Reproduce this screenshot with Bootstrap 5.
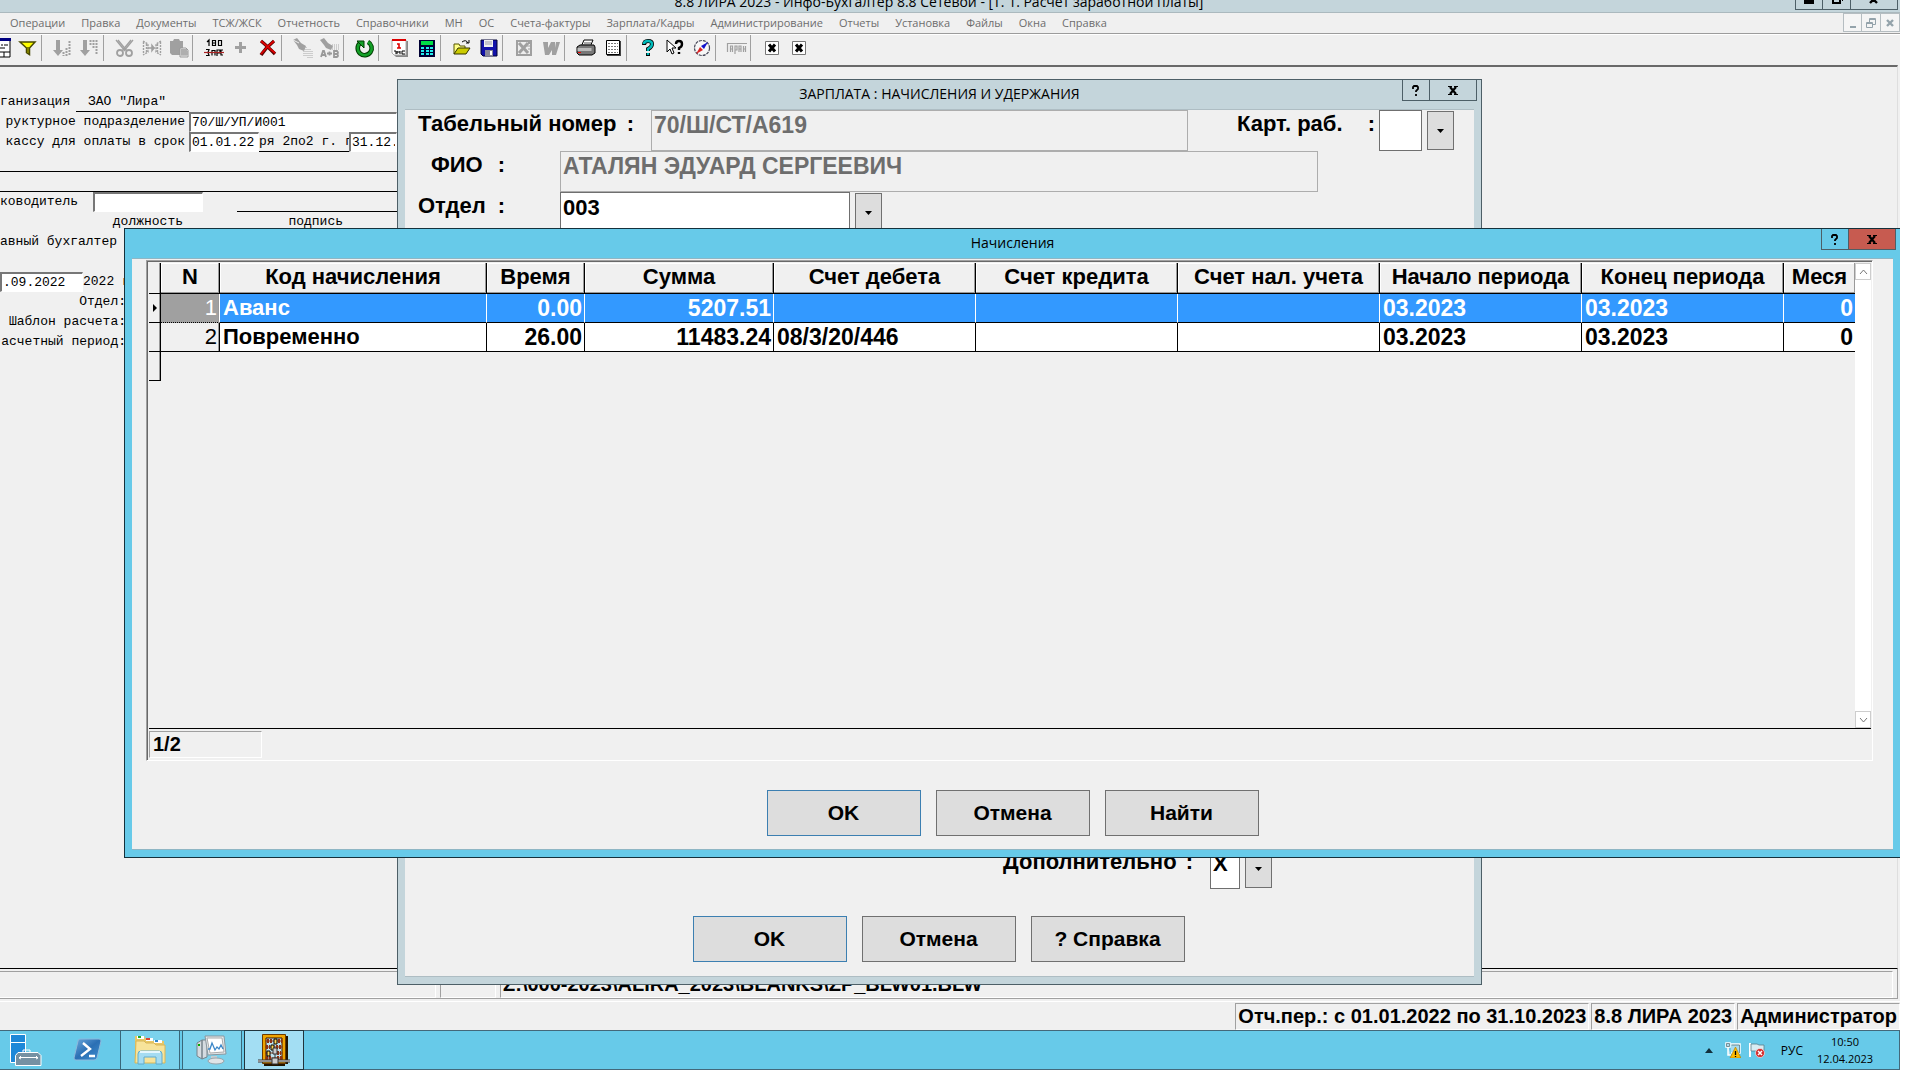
<!DOCTYPE html>
<html lang="ru">
<head>
<meta charset="utf-8">
<meta name="viewport" content="width=device-width, initial-scale=1">
<title>Инфо-Бухгалтер 8.8</title>
<link href="https://cdn.jsdelivr.net/npm/bootstrap@5.3.0/dist/css/bootstrap.min.css" rel="stylesheet">
<style>
:root{--face:#f0f0f0;--frame:#c4d5db;--sky:#67cae9;--ui:"Open Sans","Noto Sans",sans-serif;--form:"Liberation Sans",Arial,sans-serif;--mono:"Liberation Mono","Courier New",monospace}
body{background:#fff;color:#000;font-family:var(--ui);overflow:hidden}
.desk{height:calc(100vh - 10px);margin-right:20px;background:var(--face)}
button,input{border-radius:0;font:inherit;color:inherit}
.apptitle{height:13px;background:var(--frame);border-bottom:1px solid #abb9be;font-size:14px;line-height:20px}
.apptitle .caption{padding-right:22px}
.capbtn{height:21px;width:28px;padding:0;border:1px solid #4d5f67;border-top:0;background:transparent;display:flex;align-items:center;justify-content:center}
.capbtn + .capbtn{border-left:0}
.capbtn.wide{width:47px}
.capbtn.red{background:#c75b50}
.mainbtns{right:2px;top:-11px}
.menu{height:22px;border-bottom:1px solid #fff;box-shadow:inset 0 -1px #9c9c9c;padding-left:10px;gap:16px;font-size:11px;line-height:20px}
.menu a{color:#6d6d6d;text-decoration:none;white-space:nowrap}
.mdi{width:19px;height:19px;padding:0;border:1px solid #b5bdc1;background:#f5f5f5;display:flex}
.mdi + .mdi{border-left:0}
.tools{height:30px;margin-left:-13px}
.tool{width:27px;height:26px;padding:0;border:0;background:transparent;display:flex;align-items:center;justify-content:center;flex:none}
.split{width:8px;height:26px;border-left:1px solid #a0a0a0;flex:none}
.sheet{border-top:2px solid #696969;border-bottom:1px solid #000;padding-top:25px;margin-right:2px;border-right:1px solid #dedede;font-family:var(--mono);font-size:13px;line-height:19px;white-space:pre}
.line{height:20px;width:397px;overflow:hidden;flex:none}
.line > *{flex:none}
.line > .fill{flex:1 1 0;min-width:0}
.rule{border-bottom:1px solid #000}
.cell{height:20px;border:1px solid #fff;border-top:2px solid #777;border-left:2px solid #777;background:#fff;padding:0 1px;font-size:13px;line-height:17px;outline:0}
.w-org{width:76px}.w-org2{width:113px;padding-left:12px}.w-lab{width:189px;padding-right:4px}.w-date{width:70px}.w-mid{width:90px;overflow:hidden}
.w-head{width:92px;margin-right:1px}.w-post{width:110px;margin-right:34px}.w-day{width:83px}.w-side{width:126px}
.w-caps{width:183px}.w-sign{width:160px}
.stat{font-family:var(--form);font-weight:700;font-size:20px;line-height:24px;white-space:nowrap}
.stat1{height:33px;padding:2px 7px 3px 0;border-bottom:1px solid #fff;box-shadow:inset -2px -2px var(--face),inset -3px -3px #a0a0a0}
.stat2{height:28px;gap:2px;padding-top:1px}
.pane{border:1px solid #a0a0a0;border-right-color:#fff;border-bottom-color:#fff;padding:0 2px}
.p1{width:436px;border-left:0}.p2{width:56px}
.task{height:40px;background:var(--sky);border:1px solid #43687a;border-left:0;font-size:12px;line-height:17px}
.tbtn{height:40px;padding:0;border:0;background:transparent;display:flex;align-items:center;justify-content:center;flex:none}
.tbtn.start{width:52px}.tbtn.shell{width:68px;padding-left:4px}
.tbtn.run{width:60px;background:#7bd2ec;border:1px solid #39677a;margin-right:2px}
.tbtn.now{background:#a3def3;border-color:#21343c}
.tray{gap:8px;padding-right:24px}
.clock{width:60px;font-size:11px}
.win{position:absolute;border:1px solid #4d5f67;background:var(--frame);padding:0 7px 7px}
.wtitle{height:29px;font-size:14px;line-height:28px;text-align:center}
.wbtns{position:absolute;top:0;right:4px}
.inside{background:var(--face);border-top:1px solid #aebdc3;border-bottom:1px solid #aebdc3;font-family:var(--form);font-weight:700;font-size:22px;line-height:26px}
.pay{left:397px;top:79px;width:1085px}
.acc{left:124px;top:228px;right:-1px;background:var(--sky);border-color:#15313c}
.acc .inside{border-top-color:#8fb6c4;border-bottom-color:#8fb6c4}
.frow{height:41px}
.frow label{display:flex;justify-content:space-between;line-height:28px;white-space:nowrap}
.fld{height:41px;border:1px solid #6f6f6f;background:#fff;padding:2px 2px 12px;font-weight:700;outline:0;flex:none;min-width:0}
.fld:disabled{background:var(--face);border-color:#adadad;color:#6d6d6d;opacity:1;font-size:23px}
.drop{width:27px;height:39px;margin:1px 0 0 5px;border:1px solid #707070;background:#ddd;padding:0;flex:none}
.l-num{width:216px;margin:0 17px 0 13px}.l-fio{width:74px;margin:0 55px 0 26px}.l-dep{width:87px;margin:0 55px 0 13px}.l-card{width:138px;margin-left:49px;margin-right:4px}.l-add{width:190px;margin:0 17px 0 598px}
.f-num{width:537px}.f-fio{width:758px}.f-dep{width:290px}.f-card{width:43px}.f-add{width:30px}
.rest{height:615px}
.cmd{width:154px;height:46px;border:1px solid #707070;background:#ddd;font-weight:700;font-size:21px;padding:0}
.cmd.def{border-color:#3c7fb1}
.cmds{gap:15px;padding:29px 0 13px}
.pay .cmds{padding:27px 2px 14px 0}
.listbox{border:1px solid #a0a0a0;border-right-color:#fff;border-bottom-color:#fff;box-shadow:inset 1px 1px #696969;padding:2px 1px 0 2px;margin:1px 20px 0 14px}
.view{height:466px;border-bottom:1px solid #000}
.grid{table-layout:fixed;border-collapse:separate;border-spacing:0;width:100%}
.grid th,.grid td{height:29px;border-right:1px solid #000;border-bottom:1px solid #000;padding:0 2px 0 3px;line-height:26px;overflow:hidden;white-space:nowrap;background:#fff}
.grid th{height:31px;padding:0 0 2px;text-align:center;background:var(--face);box-shadow:inset -1px -1px #999,inset 1px 1px #fff}
.grid .val{font-size:23px}
.grid .ind,.grid .num{background:var(--face);box-shadow:inset -1px 0 #999}
.grid .ind{padding:0}
.grid .num{font-weight:400}
.grid .sel td{background:#3399ff;color:#fff;border-right-color:#fff}
.grid .sel .ind{background:var(--face);border-right-color:#000;color:#000}
.grid .sel .num{background:#a0a0a0;border-bottom-style:dotted}
.grid .void td{background:transparent;border:0}
.grid .void .ind{border-right:1px solid #000;border-bottom:1px solid #000}
.grid tr > :last-child{border-right:0}
.c0{width:12px}.c1{width:59px}.c2{width:267px}.c3{width:98px}.c4{width:189px}.c5{width:202px}
.scroll{width:16px;background:#fff}
.scroll button{width:16px;height:17px;padding:0;border:1px solid #cdcdcd;background:#fff;display:flex;align-items:center;justify-content:center}
.foot{height:31px;padding:2px 0;font-size:20px}
.foot .pane{width:113px;line-height:24px;padding-left:3px}
svg{display:block;flex:none}
</style>
</head>
<body>
<div class="desk position-relative d-flex flex-column overflow-hidden">

<header class="apptitle position-relative d-flex align-items-end overflow-hidden flex-shrink-0">
  <div class="caption flex-grow-1 text-center">8.8 ЛИРА 2023 - Инфо-Бухгалтер 8.8 Сетевой - [Т. 1. Расчет заработной платы]</div>
  <div class="mainbtns position-absolute d-flex">
    <button class="capbtn" aria-label="Свернуть"><svg width="12" height="16"><path d="M1 9h10v4H1z"/></svg></button>
    <button class="capbtn" aria-label="Восстановить"><svg width="12" height="16"><path d="M2 5h7v7H2zM5 3h7v7" fill="none" stroke="#000" stroke-width="2"/></svg></button>
    <button class="capbtn wide" aria-label="Закрыть"><svg width="12" height="16"><path d="M2 5l7 7M9 5l-7 7" stroke="#000" stroke-width="2.4"/></svg></button>
  </div>
</header>

<nav class="menu d-flex flex-shrink-0">
  <a href="#">Операции</a><a href="#">Правка</a><a href="#">Документы</a><a href="#">ТСЖ/ЖСК</a><a href="#">Отчетность</a><a href="#">Справочники</a><a href="#">МН</a><a href="#">ОС</a><a href="#">Счета-фактуры</a><a href="#">Зарплата/Кадры</a><a href="#">Администрирование</a><a href="#">Отчеты</a><a href="#">Установка</a><a href="#">Файлы</a><a href="#">Окна</a><a href="#">Справка</a>
  <div class="d-flex ms-auto">
    <button class="mdi" aria-label="Свернуть окно"><svg width="17" height="17"><path d="M6 12h6v2H6z" fill="#94a3ab"/></svg></button>
    <button class="mdi" aria-label="Восстановить окно"><svg width="17" height="17" fill="none" stroke="#94a3ab"><path d="M4.500 8.500h6v5h-6zM4 9.500h7M7.500 8V4.500h6v6H11M7 5.500h7"/></svg></button>
    <button class="mdi" aria-label="Закрыть окно"><svg width="17" height="17"><path d="M6 6l6 6M12 6l-6 6" stroke="#94a3ab" stroke-width="2.4"/></svg></button>
  </div>
</nav>

<div class="tools d-flex flex-shrink-0" role="toolbar">
  <button class="tool" aria-label="Таблица"><svg width="20" height="20"><path d="M0 1h19v18H0z" fill="#fff" stroke="#000"/><path d="M0 0h20v3H0z" fill="#000080"/><path d="M4 7h4m2 0h2m1 0h4M4 10h3m2 0h5M0 14h19m-13 0v5m7-5v5" stroke="#000" fill="none"/></svg></button>
  <button class="tool" aria-label="Фильтр"><svg width="20" height="20"><path d="M2 4h15l-5.500 6v6.500l-3-2V10z" fill="#ff0" stroke="#4a4a00" stroke-width="1.500"/><path d="M10 9v6" stroke="#808000" stroke-width="2"/></svg></button>
  <div class="split"></div>
  <button class="tool" aria-label="По возрастанию"><svg width="20" height="20"><path d="M3 2h4v10h3l-5 6-5-6h3z" fill="#a0a0a0"/><path d="M10.500 14v4M13.500 10v8M16.500 3v15" stroke="#a0a0a0" stroke-width="2" stroke-dasharray="2 1"/></svg></button>
  <button class="tool" aria-label="По убыванию"><svg width="20" height="20"><path d="M3 2h4v10h3l-5 6-5-6h3z" fill="#a0a0a0"/><path d="M10.500 2v5M13.500 2v9M16.500 2v15" stroke="#a0a0a0" stroke-width="2" stroke-dasharray="2 1"/></svg></button>
  <div class="split"></div>
  <button class="tool" aria-label="Вырезать"><svg width="20" height="20" fill="none" stroke="#a0a0a0"><path d="M3 2l9 11M16 2L7 13M1 2l9 11M18 2L9 13" stroke-width="1.300"/><circle cx="5" cy="15" r="3" stroke-width="1.800"/><circle cx="14" cy="15" r="3" stroke-width="1.800"/></svg></button>
  <button class="tool" aria-label="Сжать"><svg width="20" height="20" fill="none" stroke="#a0a0a0"><path d="M1.500 4v11M4.500 6v8M1 3l5 3v8l-5 3M18.500 4v11M15.500 6v8M19 3l-5 3v8l5 3" stroke-dasharray="2 1" stroke-width="1.400"/><path d="M6 10h7M10 7.500l2 2.500-2 2.500z" fill="#a0a0a0" stroke-width="1.500"/></svg></button>
  <button class="tool" aria-label="Вставить"><svg width="20" height="20"><path d="M1 3h3l1-2h5l1 2h3v14H3l-2-2z" fill="#a0a0a0"/><path d="M11 10h6l2 2v7h-8z" fill="#eee" stroke="#999"/><path d="M12 12h6m-6 2h7m-7 2h7M13 11v7m2-7v7m2-7v7" stroke="#999"/></svg></button>
  <div class="split"></div>
  <button class="tool" aria-label="Изменить запись"><svg width="20" height="20" fill="none" stroke="#000" stroke-width="1.200"><path d="M3 4l2-2v6M8.500 2.500h3v5h-3zM8 5h4M14.500 2.500h3v5h-3zM2 11.500h3l-1 3 1 3H2M8 17.500v-5h3v5M13 12h3v3h-3zM13 12v6M19 12h-2v5h2"/><path d="M0 14.500h20" stroke="#a22"/></svg></button>
  <button class="tool" aria-label="Добавить"><svg width="20" height="20"><path d="M8 4h3v4h4v3h-4v4H8v-4H4V8h4z" fill="#a0a0a0"/></svg></button>
  <button class="tool" aria-label="Удалить"><svg width="20" height="20"><path d="M3 3c5 4 9 8 14 13M16 3C11 7 7 11 3 17" stroke="#500" stroke-width="3.400" fill="none"/><path d="M3 3c5 4 9 8 14 12M16 3C11 7 7 11 3 16" stroke="#d00" stroke-width="1.800" fill="none"/></svg></button>
  <div class="split"></div>
  <button class="tool" aria-label="Найти"><svg width="20" height="20"><path d="M0 2l4-2 4 5 5 3-2 5-5-2-2-4z" fill="#a0a0a0"/><path d="M11 9v10m2-10v10m2-8v9m2-9v9m2-7v7" stroke="#a8a8a8" stroke-dasharray="1 1"/><path d="M0 2l6 3" stroke="#eee"/></svg></button>
  <button class="tool" aria-label="Заменить"><svg width="20" height="20"><path d="M0 2l4-2 4 5 5 3-2 4-5-2-2-3z" fill="#a0a0a0"/><path d="M12 7h7m-7 2h7m-7 2h7" stroke="#a8a8a8" stroke-dasharray="1 1"/><path d="M1 19l2-6h1l2 6M2 17h4M7 15.500h5m-2.500-2v4M14 13v6h3q2-1 0-3h-3 3q2-1 0-3z" fill="none" stroke="#999" stroke-width="1.800"/></svg></button>
  <div class="split"></div>
  <button class="tool" aria-label="Обновить"><svg width="20" height="20"><path d="M5 5A7 7 0 1 0 13 4" fill="none" stroke="#003c00" stroke-width="4.600"/><path d="M5 5A7 7 0 1 0 13 4" fill="none" stroke="#14a028" stroke-width="2.600"/><path d="M2 3h7v7z" fill="#14a028" stroke="#003c00"/></svg></button>
  <div class="split"></div>
  <button class="tool" aria-label="Календарь"><svg width="20" height="20"><path d="M3 3h15v16H6l-3-3z" fill="#888"/><path d="M2 2h14v15H4l-2-2z" fill="#fff" stroke="#aaa"/><path d="M2 1h14v2H2z" fill="#d00"/><path d="M7 6h2v4m-2 0h4" stroke="#d00" stroke-width="1.600" fill="none"/><path d="M4 13h2v3m1-3v3m0-2h3m0-1v3m2-3h3m-3 0v3h3" stroke="#000" fill="none"/></svg></button>
  <button class="tool" aria-label="Калькулятор"><svg width="20" height="20"><path d="M2 2h16v17H2z" fill="#003"/><path d="M4 3h12v4H4z" fill="#0d4"/><path d="M4 9h3v2H4zm5 0h3v2H9zm4 0h3v2h-3zM4 12h3v2H4zm5 0h3v2H9zm4 0h3v2h-3zM4 15h3v2H4zm5 0h3v2H9zm4 0h3v2h-3z" fill="#2ee"/></svg></button>
  <div class="split"></div>
  <button class="tool" aria-label="Открыть"><svg width="20" height="20"><path d="M2 16V6h5l1 2h5v2" fill="#ff8" stroke="#550"/><path d="M2 16l4-6h12l-4 6z" fill="#cc0" stroke="#330"/><path d="M10 4q4-3 6 1m1-3v3h-3" fill="none" stroke="#000"/></svg></button>
  <button class="tool" aria-label="Сохранить"><svg width="20" height="20"><path d="M2 2h16v16H4l-2-2z" fill="#11a" stroke="#003"/><path d="M5 2h9v7H5z" fill="#eee"/><path d="M6 12h8v6H6z" fill="#889"/><path d="M11 13h2v4h-2z" fill="#fff"/><path d="M6 4h7M6 6h7" stroke="#99a"/></svg></button>
  <div class="split"></div>
  <button class="tool" aria-label="Excel"><svg width="20" height="20"><path d="M2 2h16v16H2z" fill="#a0a0a0"/><path d="M4 4h10v2h2v10H4z" fill="#eee"/><path d="M5 5l9 10M14 5L5 15" stroke="#a0a0a0" stroke-width="3"/><path d="M13 8h4m-3 3h3" stroke="#a0a0a0"/></svg></button>
  <button class="tool" aria-label="Word"><svg width="20" height="20"><path d="M2 4h5l0 6 3-6h4l0 6 1-6h4l-4 13h-4v-5l-3 5H4z" fill="#a0a0a0"/></svg></button>
  <div class="split"></div>
  <button class="tool" aria-label="Печать"><svg width="20" height="20"><path d="M5 9l3-7h9l-3 7z" fill="#fff" stroke="#000"/><path d="M8 5h7M7 7h7" stroke="#555"/><path d="M1 9l3-2h14l1 2v6l-3 2H3l-2-2z" fill="#777" stroke="#000"/><path d="M1.500 10h14v3h-14z" fill="#bbb"/><path d="M2 14.500h3" stroke="#e00"/></svg></button>
  <button class="tool" aria-label="Просмотр"><svg width="20" height="20"><path d="M4 3h14v15H4z" fill="#444"/><path d="M3.500 2.500h13v14h-13z" fill="#fff" stroke="#000"/><path d="M5 5.500h10M5 8.500h10M5 11.500h10M5 14.500h10" stroke="#777" stroke-dasharray="2 1"/></svg></button>
  <div class="split"></div>
  <button class="tool" aria-label="Справка"><svg width="20" height="20" fill="none"><path d="M6 7q0-4 4-4t4 3-4 5v2M10 15v3" stroke="#000" stroke-width="4"/><path d="M6 6q0-3 4-3t4 3-4 5v2M10 15v2" stroke="#0bb" stroke-width="2.400"/></svg></button>
  <button class="tool" aria-label="Что это"><svg width="20" height="20"><path d="M2 2v12l3-3 2 5 2-1-2-5h4z" fill="#fff" stroke="#000"/><path d="M11 6q0-3 3-3t3 3-3 4v2m0 2v2" fill="none" stroke="#000" stroke-width="2.400"/></svg></button>
  <button class="tool" aria-label="Обзор"><svg width="20" height="20"><circle cx="10" cy="10" r="7.500" fill="#f7f7f7" stroke="#445" stroke-width="1.200" stroke-dasharray="3 1"/><path d="M16 4l-7 4 3 3z" fill="#11c"/><path d="M4 16l4-7 3 3z" fill="#d22"/></svg></button>
  <div class="split"></div>
  <button class="tool" aria-label="Гарант"><svg width="22" height="20" fill="none" stroke="#a0a0a0" stroke-width="1.200"><path d="M1.500 14V5.500H21M4.500 14V8h2v6m0-3h-2M9 16V8h2v4H9M13 14V8h2v6m-2-3h2M17.500 8v6m0-3h2m0-3v6"/></svg></button>
  <div class="split"></div>
  <button class="tool" aria-label="Закрыть"><svg width="20" height="20"><path d="M3.500 3.500h13v13h-13z" fill="#fff" stroke="#777"/><path d="M7 6.500l6 7M13 6.500l-6 7" stroke="#000" stroke-width="3"/></svg></button>
  <button class="tool" aria-label="Закрыть все"><svg width="20" height="20"><path d="M3.500 3.500h13v13h-13z" fill="#fff" stroke="#777"/><path d="M7 6.500l6 7M13 6.500l-6 7" stroke="#000" stroke-width="3"/></svg></button>
</div>

<main class="sheet flex-grow-1 d-flex flex-column overflow-hidden">
<div class="line d-flex"><span class="w-org">ганизация</span><span class="w-org2 rule">ЗАО "Лира"</span></div>
<div class="line d-flex"><label class="w-lab text-end" for="unit">руктурное подразделение</label><input id="unit" class="cell fill" value="70/Ш/УП/И001"></div>
<div class="line d-flex"><label class="w-lab text-end" for="from">кассу для оплаты в срок</label><input id="from" class="cell w-date" value="01.01.22"><span class="w-mid rule">ря 2по2 г. г</span><input class="cell fill" aria-label="По дату" value="31.12."></div>
<div class="line rule"></div>
<div class="line rule"></div>
<div class="line d-flex"><label class="w-head" for="post">ководитель</label><input id="post" class="cell w-post"><span class="fill rule"></span></div>
<div class="line d-flex"><span class="w-caps text-end">должность</span><span class="w-sign text-end">подпись</span></div>
<div class="line">авный бухгалтер</div>
<div class="line"></div>
<div class="line d-flex"><input class="cell w-day" aria-label="Дата" value=".09.2022"><span>2022 г</span></div>
<div class="line d-flex"><span class="w-side text-end">Отдел:</span></div>
<div class="line d-flex"><span class="w-side text-end">Шаблон расчета:</span></div>
<div class="line d-flex"><span class="w-side text-end">асчетный период:</span></div>
</main>

<div class="stat stat1 d-flex flex-shrink-0">
  <div class="pane p1"></div><div class="pane p2 mx-1"></div><div class="pane flex-grow-1">Z:\000-2023\ALIRA_2023\BLANKS\ZP_BLW01.BLW</div>
</div>
<div class="stat stat2 d-flex justify-content-end flex-shrink-0">
  <div class="pane">Отч.пер.: с 01.01.2022 по 31.10.2023</div><div class="pane">8.8 ЛИРА 2023</div><div class="pane">Администратор</div>
</div>

<footer class="task d-flex align-items-center flex-shrink-0">
  <button class="tbtn start" aria-label="Диспетчер серверов"><svg width="34" height="34" stroke="#fff" stroke-width="1"><path d="M1.500 1.500h15v8h-15zM1.500 9.500h15v20h-15z" fill="#1e88d8"/><path d="M14 20v-3h7v3" fill="none"/><path d="M9 19.500h20l3 3v10H6.500v-10z" fill="#7591a3"/><path d="M10 24.500h19M12 23l-2 2 2 1M27 23l2 2-2 1" fill="none"/></svg></button>
  <button class="tbtn shell" aria-label="PowerShell"><svg width="30" height="26"><defs><linearGradient id="ps" x1="0" y1="0" x2="1" y2="1"><stop offset="0" stop-color="#6da9dc"/><stop offset=".5" stop-color="#2b6fb4"/><stop offset="1" stop-color="#3f8fd0"/></linearGradient></defs><path d="M7 2h19q2 0 2 2l-4 17q-1 2-3 2H3q-2 0-2-2L5 4q0-2 2-2z" fill="url(#ps)" stroke="#8db9dc"/><path d="M10 6l7 6-9 7M16 19h6" fill="none" stroke="#fff" stroke-width="2.400"/></svg></button>
  <button class="tbtn run" aria-label="Проводник"><svg width="34" height="32"><path d="M2 5V2h9l2 3h6l1 2h11v22H2z" fill="#e8c766"/><path d="M3 7h8l2 2h8l2 2h9v18H2z" fill="#f7e39a" stroke="#d9b656"/><path d="M4 2h7v3H4zM13 4h7v3h-7zM21 6h8v3h-8z" fill="#fff"/><path d="M5 2h3v2H5z" fill="#2a2"/><path d="M13 4h4v2h-4z" fill="#d43"/><path d="M22 6h3v2h-3z" fill="#38c"/><path d="M5 30V20q0-3 3-3h18q3 0 3 3v10h-6v-7H11v7z" fill="#a5dcf2" stroke="#5eacd0"/><path d="M7 18h20" stroke="#e5f7fd" stroke-width="2"/></svg></button>
  <button class="tbtn run" aria-label="Монитор"><svg width="32" height="30"><path d="M1 8l5-3v19l-5-3zM6 5h5v17l-5 2z" fill="#d5dbe0" stroke="#76838b"/><path d="M2 9h2v2H2z" fill="#0a0"/><path d="M15 21h6v4h-6z" fill="#c8ced2"/><ellipse cx="20" cy="26" rx="8" ry="3" fill="#dfe4e7" stroke="#98a3a9"/><path d="M9 1h19l2 18-18 1z" fill="#e3e7ea" stroke="#8a979e"/><path d="M11 3h15l2 14-14 1z" fill="#fff" stroke="#aaa"/><path d="M12 14h2l2-6 3 7 2-3 2 2 2-4 2 4" fill="none" stroke="#3a86c8" stroke-width="1.300"/></svg></button>
  <button class="tbtn run now" aria-label="Инфо-Бухгалтер"><svg width="34" height="34"><path d="M7 3h24v28h-3v2H7z" fill="#221500"/><path d="M5.500 1.500h23v29h-23z" fill="#eea400" stroke="#6b3a00"/><path d="M9 5h16v22H9z" fill="#bfe3ef" stroke="#3a1500"/><path d="M8 8h18M8 14h18M8 20h18M8 25h18" stroke="#8a3b14"/><g stroke="#8d3315" stroke-width="4" stroke-dasharray="2 1"><path d="M10 8h5M21 8h4M9 14h4M19 14h6M20 20h4M9 25h5M20 25h5"/></g><g fill="#ffd75a" stroke="#000"><path d="M17 6h3v5h-3zM14 12h3v5h-3zM10 18h3v5h-3z"/></g><path d="M1 28h32" stroke="#333" stroke-width="3"/><path d="M1 28h32" stroke="#eee"/><path d="M15 25h6v6h-6zM16 15h4v6h-4zM18 21v4" fill="#ccc" stroke="#333"/></svg></button>
  <div class="tray d-flex align-items-center ms-auto">
    <svg width="8" height="5"><path d="M0 5l4-5 4 5z" fill="#12303c"/></svg>
    <svg class="ms-1" width="16" height="16"><path d="M1 1h4v4H1zM3 5v8h3M6 2h9v9H6M8 14h5" fill="#a9dcee" stroke="#fff" stroke-width="1.500"/><path d="M1.500 1.500h3v3h-3zM6.500 3h8v8" fill="none" stroke="#47616b" stroke-width=".7"/><path d="M10.500 5l5.500 11H5z" fill="#fb0" stroke="#a70" stroke-width=".6"/><path d="M10.500 9v4m0 1v1" stroke="#000" stroke-width="1.300"/></svg>
    <svg width="16" height="16"><path d="M1 1v14" stroke="#fff" stroke-width="2"/><path d="M2 2h6l2 1h5v8H8L7 9H2z" fill="#d8edf4" stroke="#5c7f8c" stroke-width=".8"/><circle cx="11" cy="11" r="4.500" fill="#d42b2b" stroke="#fff" stroke-width=".6"/><path d="M9 9l4 4M13 9l-4 4" stroke="#fff" stroke-width="1.500"/></svg>
    <span class="ms-2">РУС</span>
    <div class="clock text-center ms-1">10:50<br>12.04.2023</div>
  </div>
</footer>

<section class="win pay">
  <div class="wtitle">ЗАРПЛАТА : НАЧИСЛЕНИЯ И УДЕРЖАНИЯ</div>
  <div class="wbtns d-flex">
    <button class="capbtn" aria-label="Справка"><svg width="8" height="11"><path d="M1 4V2l1-1h3l1 1v2L4 6v1M4 9v2" fill="none" stroke="#000" stroke-width="1.800"/></svg></button>
    <button class="capbtn wide" aria-label="Закрыть"><svg width="10" height="9"><path d="M2 1l6 7M8 1L2 8" stroke="#000" stroke-width="2.200"/><path d="M0 .500h4m2 0h4M0 8.500h4m2 0h4" stroke="#000"/></svg></button>
  </div>
  <div class="inside">
    <div class="frow d-flex"><label class="l-num" for="num">Табельный номер <span>:</span></label><input id="num" class="fld f-num" disabled value="70/Ш/СТ/А619"><label class="l-card" for="card">Карт. раб. <span>:</span></label><input id="card" class="fld f-card"><button class="drop" aria-label="Выбрать"><svg class="m-auto" width="7" height="4"><path d="M0 0h7L3.500 4z"/></svg></button></div>
    <div class="frow d-flex"><label class="l-fio" for="fio">ФИО <span>:</span></label><input id="fio" class="fld f-fio" disabled value="АТАЛЯН ЭДУАРД СЕРГЕЕВИЧ"></div>
    <div class="frow d-flex"><label class="l-dep" for="dep">Отдел <span>:</span></label><input id="dep" class="fld f-dep" value="003"><button class="drop" aria-label="Выбрать отдел"><svg class="m-auto" width="7" height="4"><path d="M0 0h7L3.500 4z"/></svg></button></div>
    <div class="rest"></div>
    <div class="frow d-flex"><label class="l-add" for="add">Дополнительно <span>:</span></label><input id="add" class="fld f-add" value="X"><button class="drop" aria-label="Выбрать дополнительно"><svg class="m-auto" width="7" height="4"><path d="M0 0h7L3.500 4z"/></svg></button></div>
    <div class="cmds d-flex justify-content-center"><button class="cmd def">OK</button><button class="cmd">Отмена</button><button class="cmd">? Справка</button></div>
  </div>
</section>

<section class="win acc">
  <div class="wtitle">Начисления</div>
  <div class="wbtns d-flex">
    <button class="capbtn" aria-label="Справка"><svg width="8" height="11"><path d="M1 4V2l1-1h3l1 1v2L4 6v1M4 9v2" fill="none" stroke="#000" stroke-width="1.800"/></svg></button>
    <button class="capbtn wide red" aria-label="Закрыть"><svg width="10" height="9"><path d="M2 1l6 7M8 1L2 8" stroke="#000" stroke-width="2.200"/><path d="M0 .500h4m2 0h4M0 8.500h4m2 0h4" stroke="#000"/></svg></button>
  </div>
  <div class="inside">
    <div class="listbox">
      <div class="view d-flex">
        <div class="flex-grow-1 overflow-hidden">
          <table class="grid">
            <colgroup><col class="c0"><col class="c1"><col class="c2"><col class="c3"><col class="c4"><col class="c5"><col class="c5"><col class="c5"><col class="c5"><col class="c5"><col></colgroup>
            <thead><tr><th class="ind"></th><th>N</th><th>Код начисления</th><th>Время</th><th>Сумма</th><th>Счет дебета</th><th>Счет кредита</th><th>Счет нал. учета</th><th>Начало периода</th><th>Конец периода</th><th>Меся</th></tr></thead>
            <tbody>
            <tr class="sel"><td class="ind"><svg class="mx-auto" width="4" height="8"><path d="M0 0l4 4-4 4z"/></svg></td><td class="num text-end">1</td><td>Аванс</td><td class="val text-end">0.00</td><td class="val text-end">5207.51</td><td></td><td></td><td></td><td class="val">03.2023</td><td class="val">03.2023</td><td class="val text-end">0</td></tr>
            <tr><td class="ind"></td><td class="num text-end">2</td><td>Повременно</td><td class="val text-end">26.00</td><td class="val text-end">11483.24</td><td class="val">08/3/20/446</td><td></td><td></td><td class="val">03.2023</td><td class="val">03.2023</td><td class="val text-end">0</td></tr>
            <tr class="void"><td class="ind"></td><td colspan="10"></td></tr>
            </tbody>
          </table>
        </div>
        <div class="scroll d-flex flex-column justify-content-between flex-shrink-0">
          <button aria-label="Вверх"><svg width="9" height="6"><path d="M1 5l3.500-4L8 5" fill="none" stroke="#777"/></svg></button>
          <button aria-label="Вниз"><svg width="9" height="6"><path d="M1 1l3.500 4L8 1" fill="none" stroke="#777"/></svg></button>
        </div>
      </div>
      <div class="foot d-flex"><div class="pane">1/2</div></div>
    </div>
    <div class="cmds d-flex justify-content-center"><button class="cmd def">OK</button><button class="cmd">Отмена</button><button class="cmd">Найти</button></div>
  </div>
</section>
</div>
<script src="https://cdn.jsdelivr.net/npm/bootstrap@5.3.0/dist/js/bootstrap.bundle.min.js"></script>
</body>
</html>
